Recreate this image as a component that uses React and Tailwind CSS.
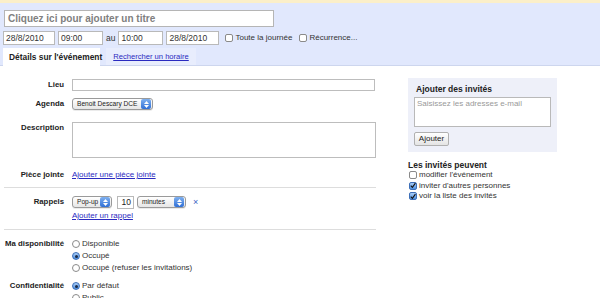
import React from 'react';

const MacSelect = ({ label, width }) => (
  <div
    className="flex items-center h-[12px] rounded-[3px] border border-[#9a9a9a] bg-gradient-to-b from-white to-[#e6e6e6] pl-[4px] shadow-[0_1px_0_rgba(0,0,0,0.08)] overflow-hidden"
    style={{ width }}
  >
    <span className="flex-1 text-[6.6px] leading-none text-[#222] whitespace-nowrap">{label}</span>
    <span className="flex flex-col items-center justify-center w-[10px] h-[10px] mr-[1px] rounded-[2px] bg-gradient-to-b from-[#7fb0ef] to-[#2f6fd6] gap-[1px]">
      <svg width="5" height="3" viewBox="0 0 5 3"><path d="M0 3 L2.5 0 L5 3 Z" fill="#fff" /></svg>
      <svg width="5" height="3" viewBox="0 0 5 3"><path d="M0 0 L2.5 3 L5 0 Z" fill="#fff" /></svg>
    </span>
  </div>
);

const Checkbox = ({ checked }) => (
  <span
    className={`inline-flex items-center justify-center w-[8px] h-[8px] rounded-[2px] border ${
      checked ? 'border-[#3d6fb8] bg-gradient-to-b from-[#a9cdf7] to-[#4d8fe0]' : 'border-[#8a8a8a] bg-white'
    }`}
  >
    {checked && (
      <svg width="7" height="7" viewBox="0 0 8 8">
        <path d="M1 4.2 L3.2 6.5 L7.2 0.8" stroke="#111" strokeWidth="1.5" fill="none" />
      </svg>
    )}
  </span>
);

const Radio = ({ checked, label }) => (
  <div className="flex items-center h-[12px] gap-[2px]">
    <span
      className={`inline-flex items-center justify-center w-[8px] h-[8px] rounded-full border ${
        checked ? 'border-[#3d6fb8] bg-gradient-to-b from-[#a9cdf7] to-[#4d8fe0]' : 'border-[#8a8a8a] bg-white'
      }`}
    >
      {checked && <span className="w-[3px] h-[3px] rounded-full bg-[#1b2a44]" />}
    </span>
    <span className="text-[8px] text-[#333]">{label}</span>
  </div>
);

const Label = ({ children, className = '' }) => (
  <div className={`w-[60px] shrink-0 text-right text-[7.8px] font-bold text-[#222] whitespace-nowrap ${className}`}>
    {children}
  </div>
);

const Field = ({ value, width }) => (
  <div
    className="h-[14px] bg-white border border-[#b9b9b9] px-[2px] text-[8.5px] leading-[12px] text-[#333]"
    style={{ width }}
  >
    {value}
  </div>
);

export default function App() {
  return (
    <div className="w-[600px] h-[298px] overflow-hidden bg-white font-['Liberation_Sans',Arial,sans-serif]">
      {/* header */}
      <div className="border-t-[3px] border-[#fbefc9] bg-[#e1e8fd]">
        <div className="pt-[7px] pl-[4px]">
          <div className="w-[270px] h-[17px] bg-white border border-[#b5b5b5] pl-[3px] text-[10px] leading-[15px] font-bold text-[#808080]">
            Cliquez ici pour ajouter un titre
          </div>
        </div>
        <div className="flex items-center h-[14px] mt-[4px] pl-[3px]">
          <Field value="28/8/2010" width={52} />
          <div className="w-[3px]" />
          <Field value="09:00" width={45} />
          <span className="mx-[3px] text-[8.5px] text-[#333]">au</span>
          <Field value="10:00" width={45} />
          <div className="w-[3px]" />
          <Field value="28/8/2010" width={53} />
          <div className="w-[6px]" />
          <Checkbox />
          <span className="ml-[2px] text-[8px] text-[#333]">Toute la journée</span>
          <div className="w-[7px]" />
          <Checkbox />
          <span className="ml-[2px] text-[8px] text-[#333]">Récurrence...</span>
        </div>
        <div className="flex items-end h-[21px] pl-[3px] border-b border-[#cdd6ee]">
          <div className="h-[18px] w-[97px] -mb-[1px] bg-white pl-[6px] flex items-center text-[8.4px] font-bold text-[#222] whitespace-nowrap">
            Détails sur l'événement
          </div>
          <div className="h-[17px] ml-[6px] w-[90px] flex items-center justify-center bg-[#e8edfd] text-[7.6px] text-[#2a2ac0] underline">
            Rechercher un horaire
          </div>
        </div>
      </div>

      {/* body */}
      <div className="flex">
        <div className="w-[372px] ml-[4px]">
          <div className="flex items-center mt-[13px] h-[12px]">
            <Label>Lieu</Label>
            <div className="ml-[8px] w-[303px] h-[12px] border border-[#bdbdbd] bg-white" />
          </div>
          <div className="flex items-center mt-[7px] h-[12px]">
            <Label>Agenda</Label>
            <div className="ml-[8px]">
              <MacSelect label="Benoit Descary DCE" width={81} />
            </div>
          </div>
          <div className="flex items-start mt-[12px]">
            <Label>Description</Label>
            <div className="ml-[8px] w-[304px] h-[36px] border border-[#bdbdbd] bg-white" />
          </div>
          <div className="flex items-center mt-[11px] h-[12px]">
            <Label>Pièce jointe</Label>
            <span className="ml-[8px] text-[8px] text-[#2a2ac0] underline">Ajouter une pièce jointe</span>
          </div>
          <div className="mt-[6px] h-px bg-[#dddddd]" />
          <div className="flex items-center mt-[8px] h-[12px]">
            <Label>Rappels</Label>
            <div className="ml-[8px] flex items-center">
              <MacSelect label="Pop-up" width={40} />
              <div className="ml-[5px] w-[17px] h-[13px] border border-[#b9b9b9] bg-white text-right pr-[2px] text-[8.5px] leading-[11px] text-[#222]">
                10
              </div>
              <div className="ml-[3px]">
                <MacSelect label="minutes" width={49} />
              </div>
              <span className="ml-[7px] text-[9px] leading-none text-[#3c64c4]">×</span>
            </div>
          </div>
          <div className="ml-[68px] mt-[2px] text-[8px] text-[#2a2ac0] underline leading-[12px]">Ajouter un rappel</div>
          <div className="mt-[7px] h-px bg-[#dddddd]" />
          <div className="flex items-start mt-[8px]">
            <Label className="leading-[12px]">Ma disponibilité</Label>
            <div className="ml-[8px]">
              <Radio label="Disponible" />
              <Radio checked label="Occupé" />
              <Radio label="Occupé (refuser les invitations)" />
            </div>
          </div>
          <div className="flex items-start mt-[6px]">
            <Label className="leading-[12px]">Confidentialité</Label>
            <div className="ml-[8px]">
              <Radio checked label="Par défaut" />
              <Radio label="Public" />
            </div>
          </div>
        </div>

        <div className="ml-[32px] w-[149px] pt-[12px]">
          <div className="bg-[#eef0f9] h-[74px] pl-[6px] pt-[6px]">
            <div className="pl-[2px] text-[8.5px] font-bold text-[#222] leading-[10px]">Ajouter des invités</div>
            <div className="mt-[3px] w-[137px] h-[30px] border border-[#b9b9b9] bg-white px-[2px] text-[8px] text-[#999] leading-[11px]">
              Saisissez les adresses e-mail
            </div>
            <div className="mt-[5px] w-[35px] h-[14px] border border-[#b0b0b0] rounded-[2px] bg-gradient-to-b from-white to-[#e4e4e4] flex items-center justify-center text-[8px] text-[#222]">
              Ajouter
            </div>
          </div>
          <div className="mt-[8px] text-[8.5px] font-bold text-[#222] leading-[10px]">Les invités peuvent</div>
          <div className="flex items-center gap-[2px] h-[10.5px] ml-[1px]">
            <Checkbox />
            <span className="text-[8px] text-[#333]">modifier l'événement</span>
          </div>
          <div className="flex items-center gap-[2px] h-[10.5px] ml-[1px]">
            <Checkbox checked />
            <span className="text-[8px] text-[#333]">inviter d'autres personnes</span>
          </div>
          <div className="flex items-center gap-[2px] h-[10.5px] ml-[1px]">
            <Checkbox checked />
            <span className="text-[8px] text-[#333]">voir la liste des invités</span>
          </div>
        </div>
      </div>
    </div>
  );
}
